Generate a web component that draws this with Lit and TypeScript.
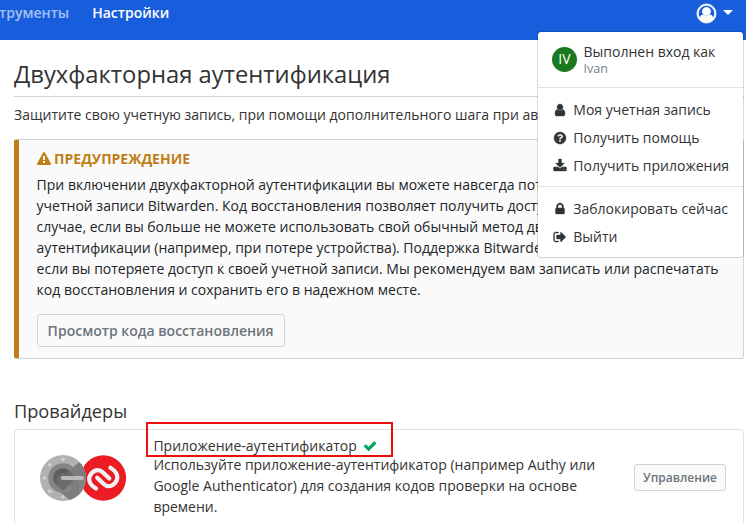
import { LitElement, html, css, svg } from "lit";
import { customElement, property } from "lit/decorators.js";

const ICONS: Record<string, string> = {
  user: "M1536 1399q0 109-62.5 187t-150.5 78h-854q-88 0-150.5-78t-62.5-187q0-85 8.5-160.5t31.5-152 58.5-131 94-89 134.5-34.5q131 128 313 128t313-128q76 0 134.5 34.5t94 89 58.5 131 31.5 152 8.5 160.5zm-256-887q0 159-112.5 271.5t-271.5 112.5-271.5-112.5-112.5-271.5 112.5-271.5 271.5-112.5 271.5 112.5 112.5 271.5z",
  help: "M1024 1376v-192q0-14-9-23t-23-9h-192q-14 0-23 9t-9 23v192q0 14 9 23t23 9h192q14 0 23-9t9-23zm256-672q0-88-55.5-163t-138.5-116-170-41q-243 0-371 213-15 24 8 42l132 100q7 6 19 6 16 0 25-12 53-68 86-92 34-24 86-24 48 0 85.5 26t37.5 59q0 38-20 61t-68 45q-63 28-115.5 86.5t-52.5 125.5v36q0 14 9 23t23 9h192q14 0 23-9t9-23q0-19 21.5-49.5t54.5-49.5q32-18 49-28.5t46-35 44.5-48 28-60.5 12.5-81zm384 192q0 209-103 385.5t-279.5 279.5-385.5 103-385.5-103-279.5-279.5-103-385.5 103-385.5 279.5-279.5 385.5-103 385.5 103 279.5 279.5 103 385.5z",
  download: "M1344 1344q0-26-19-45t-45-19-45 19-19 45 19 45 45 19 45-19 19-45zm256 0q0-26-19-45t-45-19-45 19-19 45 19 45 45 19 45-19 19-45zm128-224v320q0 40-28 68t-68 28h-1472q-40 0-68-28t-28-68v-320q0-40 28-68t68-28h465l135 136q58 56 136 56t136-56l136-136h464q40 0 68 28t28 68zm-325-569q17 41-14 70l-448 448q-18 19-45 19t-45-19l-448-448q-31-29-14-70 17-39 59-39h256v-448q0-26 19-45t45-19h256q26 0 45 19t19 45v448h256q42 0 59 39z",
  lock: "M640 768h512v-192q0-106-75-181t-181-75-181 75-75 181v192zm832 96v576q0 40-28 68t-68 28h-960q-40 0-68-28t-28-68v-576q0-40 28-68t68-28h32v-192q0-184 132-316t316-132 316 132 132 316v192h32q40 0 68 28t28 68z",
  signOut: "M704 1440q0 4 1 20t.5 26.5-3 23.5-10 19.5-20.5 6.5h-320q-119 0-203.5-84.5t-84.5-203.5v-704q0-119 84.5-203.5t203.5-84.5h320q13 0 22.5 9.5t9.5 22.5q0 4 1 20t.5 26.5-3 23.5-10 19.5-20.5 6.5h-320q-66 0-113 47t-47 113v704q0 66 47 113t113 47h312l11.5 1 11.5 3 8 5.5 7 9 2 13.5zm928-544q0 26-19 45l-544 544q-19 19-45 19t-45-19-19-45v-288h-448q-26 0-45-19t-19-45v-384q0-26 19-45t45-19h448v-288q0-26 19-45t45-19 45 19l544 544q19 19 19 45z",
  warning: "M1024 1375v-190q0-14-9.5-23.5t-22.5-9.5h-192q-13 0-22.5 9.5t-9.5 23.5v190q0 14 9.5 23.5t22.5 9.5h192q13 0 22.5-9.5t9.5-23.5zm-2-374l18-459q0-12-10-19-13-11-24-11h-220q-11 0-24 11-10 7-10 21l17 457q0 10 10 16.5t24 6.5h185q14 0 23.5-6.5t10.5-16.5zm-14-934l768 1408q35 63-2 126-17 29-46.5 46t-63.5 17h-1536q-34 0-63.5-17t-46.5-46q-37-63-2-126l768-1408q17-31 47-49t65-18 65 18 47 49z",
  check: "M1671 566q0 40-28 68l-724 724-136 136q-28 28-68 28t-68-28l-136-136-362-362q-28-28-28-68t28-68l136-136q28-28 68-28t68 28l294 295 656-657q28-28 68-28t68 28l136 136q28 28 28 68z",
  account: "M896 0q182 0 348 71t286 191 191 286 71 348q0 181-70.5 347t-190.5 286-286 191.5-349 71.5-349-71-285.5-191.5-190.5-286-71-347.5 71-348 191-286 286-191 348-71zm619 1351q149-205 149-455 0-156-61-298t-164-245-245-164-298-61-298 61-245 164-164 245-61 298q0 250 149 455 66-327 306-327 131 128 313 128t313-128q240 0 306 327zm-235-647q0-159-112.5-271.5t-271.5-112.5-271.5 112.5-112.5 271.5 112.5 271.5 271.5 112.5 271.5-112.5 112.5-271.5z",
};

@customElement("ui-icon")
class UiIcon extends LitElement {
  @property() name = "user";
  static styles = css`
    :host { display: block; flex: none; width: 14px; height: 14px; }
    svg { display: block; width: 100%; height: 100%; overflow: visible; stroke: currentColor; stroke-width: var(--icon-stroke, 0); }
  `;
  render() {
    return html`<svg viewBox="0 0 1792 1792" fill="currentColor"><path d=${ICONS[this.name]}></path></svg>`;
  }
}

@customElement("account-menu")
class AccountMenu extends LitElement {
  static styles = css`
    :host { display: block; box-sizing: border-box; background: #fff; background-clip: padding-box; border: 1px solid rgba(0, 0, 0, 0.15); border-radius: 4px; color: #333; }
    .who { display: flex; gap: 6.5px; height: 56px; padding: 0 14px; box-sizing: border-box; border-bottom: 1px solid #e2e3e4; }
    .avatar { width: 25px; height: 25px; margin-top: 15px; border-radius: 50%; background: #1b7a20; color: #fff; font-size: 14px; line-height: 24px; text-align: center; }
    .text { padding-top: 10px; line-height: 20px; white-space: nowrap; }
    .name { font-size: 12.6px; line-height: 14px; color: #777f88; }
    .group { padding: 8px 0 6px; }
    .group + .group { border-top: 1px solid #e2e3e4; }
    .item { display: flex; align-items: center; gap: 6px; height: 28px; padding-left: 15.3px; line-height: 28px; white-space: nowrap; --icon-stroke: 50; }
  `;
  private item(icon: string, label: string) {
    return html`<div class="item"><ui-icon name=${icon}></ui-icon><span>${label}</span></div>`;
  }
  render() {
    return html`
      <div class="who">
        <div class="avatar">IV</div>
        <div class="text">Выполнен вход как<div class="name">Ivan</div></div>
      </div>
      <div class="group">
        ${this.item("user", "Моя учетная запись")}
        ${this.item("help", "Получить помощь")}
        ${this.item("download", "Получить приложения")}
      </div>
      <div class="group">
        ${this.item("lock", "Заблокировать сейчас")}
        ${this.item("signOut", "Выйти")}
      </div>`;
  }
}

const dots = [45, 90, 135, 180, 225, 270].map(
  (a) => svg`<circle cx=${23 + 18.7 * Math.cos((a * Math.PI) / 180)} cy=${23 + 18.7 * Math.sin((a * Math.PI) / 180)} r="1.8" fill="#d3d3d3"></circle>`
);

@customElement("app-root")
class AppRoot extends LitElement {
  static styles = css`
    :host { display: block; position: relative; width: 746px; height: 523px; overflow: hidden; background: #fff; color: #333; font: 14px/21px "Open Sans", sans-serif; }
    * { box-sizing: border-box; }
    .nav { display: flex; height: 40px; padding: 3px 13px 0 0; background: #175ddc; color: #fff; font-weight: 600; }
    .links { display: flex; flex: 1; gap: 23px; margin-left: -28px; line-height: 20px; }
    .dim { color: #a6c0f2; }
    .account { display: flex; align-items: center; gap: 7px; height: 20px; }
    .account ui-icon { width: 19px; height: 19px; margin-top: 1px; --icon-stroke: 70; }
    .caret { border: 4.5px solid transparent; border-top-color: #fff; border-bottom: 0; margin-bottom: 2px; border-left-width: 5px; border-right-width: 5px; border-top-width: 5px; }
    .menu { position: absolute; left: 537px; top: 31px; width: 207px; height: 227px; z-index: 2; }
    .page { padding: 17px 2px 0 14px; }
    h1 { margin: 0; height: 40px; border-bottom: 1px solid #ced4dc; font-size: 23.8px; line-height: 35px; font-weight: 400; }
    .lead { margin: 7px 0 14px; white-space: nowrap; }
    .callout { height: 220px; border: 1px solid #ced4dc; border-left: 5px solid #bf7e16; border-radius: 3px; background: #fafafa; padding: 8px 17px 0 17.6px; color: #212529; }
    .warn { display: flex; align-items: center; gap: 3.5px; height: 21px; margin-bottom: 5px; color: #bf7e16; font-weight: 700; text-transform: uppercase; }
    .line { white-space: nowrap; }
    .btn { font: 600 14px/31px "Open Sans", sans-serif; color: #6c757d; background: #fafafa; border: 1px solid #ced4da; border-radius: 3px; padding: 0; text-align: center; white-space: nowrap; }
    .recover { width: 248px; height: 33px; margin-top: 14px; display: block; }
    h2 { margin: 41px 0 6px; font-size: 18.2px; line-height: 23px; font-weight: 400; }
    .card { display: flex; height: 120px; border: 1px solid #dfdfdf; border-radius: 4px; padding: 0 17px 0 25px; }
    .logo { width: 87px; height: 46px; margin-top: 25px; flex: none; }
    .body { flex: 1; padding: 7px 0 0 26.4px; }
    .name { display: flex; align-items: center; gap: 6px; height: 17px; line-height: 19px; }
    .name ui-icon { color: #00a65a; --icon-stroke: 40; }
    .manage { width: 92px; height: 27px; margin-top: 34px; font-size: 12px; line-height: 25px; }
    .mark { position: absolute; left: 146px; top: 422px; width: 247px; height: 35px; border: 2px solid #f00d0d; }
  `;
  render() {
    const lines = [
      "При включении двухфакторной аутентификации вы можете навсегда потерять",
      "учетной записи Bitwarden. Код восстановления позволяет получить доступ",
      "случае, если вы больше не можете использовать свой обычный метод двух",
      "аутентификации (например, при потере устройства). Поддержка Bitwarden",
      "если вы потеряете доступ к своей учетной записи. Мы рекомендуем вам записать или распечатать",
      "код восстановления и сохранить его в надежном месте.",
    ];
    return html`
      <div class="nav">
        <div class="links"><span class="dim">Инструменты</span><span>Настройки</span></div>
        <div class="account"><ui-icon name="account"></ui-icon><span class="caret"></span></div>
      </div>
      <account-menu class="menu"></account-menu>
      <div class="page">
        <h1>Двухфакторная аутентификация</h1>
        <div class="lead">Защитите свою учетную запись, при помощи дополнительного шага при авторизации.</div>
        <div class="callout">
          <div class="warn"><ui-icon name="warning"></ui-icon><span>Предупреждение</span></div>
          ${lines.map((l) => html`<div class="line">${l}</div>`)}
          <button class="btn recover">Просмотр кода восстановления</button>
        </div>
        <h2>Провайдеры</h2>
        <div class="card">
          <svg class="logo" viewBox="0 0 87 46">
            <defs>
              <clipPath id="dial"><circle cx="23" cy="23" r="23"></circle></clipPath>
            </defs>
            <circle cx="63.3" cy="23" r="22.8" fill="#ec1c24"></circle>
            <circle cx="23" cy="23" r="23" fill="#b1b1b1"></circle>
            ${dots}
            <path d="M22 22 38.5 7.5 50 12V36L34 48 12 31Z" fill="#7d7d7d" clip-path="url(#dial)"></path>
            <path d="M39 23H46A23 23 0 0 1 39 39.3Z" fill="#8b8b8b" opacity=".5"></path>
            <path d="M33.5 12.5A14.8 14.8 0 1 0 33.5 33.5L23 23Z" fill="#858585"></path>
            <path d="M29.6 16.1A9.6 9.6 0 1 0 16.2 29.8L23 36 36 23Z" fill="#6b6b6b"></path>
            <path d="M29.6 16.1A9.6 9.6 0 0 0 16.2 29.8L17.5 28.5Q15.2 24 18.5 20.5Q22.5 16.5 27 19Z" fill="#5e5e5e"></path>
            <path d="M22.7 23H42" stroke="#bababa" stroke-width="4" stroke-linecap="round"></path>
            <g fill="none" stroke="#f1f1f4" stroke-width="4.2" stroke-linecap="round">
              <path d="M56 33.5C48.5 29 47.5 23 51.5 18.3C55.3 14 59.7 14.2 63 17.5L69.3 23.6"></path>
              <path d="M70.4 12.8C78 17.3 79 23.3 75 28C71.2 32.3 66.8 32.1 63.5 28.8L57.2 22.7"></path>
            </g>
          </svg>
          <div class="body">
            <div class="name"><span>Приложение-аутентификатор</span><ui-icon name="check"></ui-icon></div>
            <div class="line">Используйте приложение-аутентификатор (например Authy или</div>
            <div class="line">Google Authenticator) для создания кодов проверки на основе</div>
            <div class="line">времени.</div>
          </div>
          <button class="btn manage">Управление</button>
        </div>
      </div>
      <div class="mark"></div>`;
  }
}
